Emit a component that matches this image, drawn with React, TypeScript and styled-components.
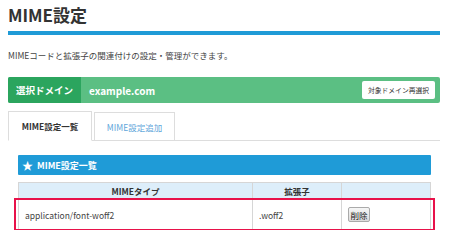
import React from "react";
import styled, { createGlobalStyle } from "styled-components";

const GlobalStyle = createGlobalStyle`
  html, body {
    margin: 0;
    padding: 0;
    background: #fff;
  }
  body {
    font-family: "Noto Sans CJK JP", "Noto Sans", sans-serif;
    color: #333;
  }
`;

const rows = [{ mime: "application/font-woff2", ext: ".woff2" }];

const App: React.FC = () => {
  return (
    <Page>
      <GlobalStyle />
      <Title>MIME設定</Title>
      <Desc>MIMEコードと拡張子の関連付けの設定・管理ができます。</Desc>

      <DomainBar>
        <DomainLabel>選択ドメイン</DomainLabel>
        <DomainName>example.com</DomainName>
        <ReselectButton>対象ドメイン再選択</ReselectButton>
      </DomainBar>

      <Tabs>
        <Tab active>MIME設定一覧</Tab>
        <Tab>MIME設定追加</Tab>
      </Tabs>

      <Panel>
        <PanelHeader>
          <Star>★</Star>
          MIME設定一覧
        </PanelHeader>

        <TableWrap>
          <Table>
            <thead>
              <tr>
                <Th style={{ width: 233 }}>MIMEタイプ</Th>
                <Th style={{ width: 88 }}>拡張子</Th>
                <Th />
              </tr>
            </thead>
            <tbody>
              {rows.map((r) => (
                <tr key={r.mime}>
                  <Td>{r.mime}</Td>
                  <Td>{r.ext}</Td>
                  <Td>
                    <DeleteButton>削除</DeleteButton>
                  </Td>
                </tr>
              ))}
            </tbody>
          </Table>
          <Highlight />
        </TableWrap>
      </Panel>
    </Page>
  );
};

const Page = styled.div`
  width: 432px;
  padding: 3px 10px 0 8px;
`;

const Title = styled.h1`
  margin: 0;
  height: 32px;
  box-sizing: border-box;
  font-size: 17px;
  font-weight: bold;
  line-height: 24px;
  color: #333;
  border-bottom: 4px solid #1f9bd7;
`;

const Desc = styled.p`
  margin: 13px 0 0;
  font-size: 8.5px;
  line-height: 14px;
  color: #444;
`;

const DomainBar = styled.div`
  margin-top: 15px;
  height: 26px;
  display: flex;
  align-items: center;
  background: #5bbf83;
  border-radius: 2px;
  overflow: hidden;
`;

const DomainLabel = styled.div`
  width: 73px;
  height: 100%;
  display: flex;
  align-items: center;
  justify-content: center;
  background: #2ba55e;
  color: #fff;
  font-size: 9.5px;
  font-weight: bold;
`;

const DomainName = styled.div`
  flex: 1;
  padding-left: 8px;
  color: #fff;
  font-size: 10px;
  font-weight: bold;
`;

const ReselectButton = styled.button`
  margin-right: 5px;
  width: 73px;
  height: 18px;
  padding: 0;
  border: none;
  border-radius: 2px;
  background: #fff;
  color: #333;
  font-family: inherit;
  font-size: 6.8px;
  white-space: nowrap;
`;

const Tabs = styled.div`
  margin-top: 8px;
  display: flex;
  align-items: flex-end;
  gap: 2px;
  height: 29px;
  border-bottom: 1px solid #ddd;
`;

const Tab = styled.div<{ active?: boolean }>`
  width: ${(p) => (p.active ? "84px" : "81px")};
  height: ${(p) => (p.active ? "30px" : "28px")};
  margin-bottom: ${(p) => (p.active ? "-1px" : "0")};
  display: flex;
  align-items: center;
  justify-content: center;
  box-sizing: border-box;
  border: 1px solid #ddd;
  border-bottom: ${(p) => (p.active ? "1px solid #fff" : "none")};
  background: #fff;
  color: ${(p) => (p.active ? "#333" : "#5fa6da")};
  font-size: 8.5px;
  font-weight: ${(p) => (p.active ? "bold" : "normal")};
`;

const Panel = styled.div`
  margin: 14px 9px 0 10px;
`;

const PanelHeader = styled.div`
  height: 20px;
  display: flex;
  align-items: center;
  gap: 4px;
  padding-left: 4px;
  background: #1f9bd7;
  border-radius: 1px;
  color: #fff;
  font-size: 9px;
  font-weight: bold;
`;

const Star = styled.span`
  font-size: 11px;
  line-height: 1;
`;

const TableWrap = styled.div`
  position: relative;
  margin-top: 7px;
`;

const Table = styled.table`
  width: 100%;
  border-collapse: collapse;
  font-size: 8.5px;
  color: #444;
`;

const Th = styled.th`
  height: 16px;
  padding: 0;
  background: #ddeefa;
  border: 1px solid #d6d6d6;
  font-weight: bold;
  color: #333;
`;

const Td = styled.td`
  height: 29px;
  padding: 0 0 0 6px;
  border: 1px solid #d6d6d6;
  text-align: left;
`;

const DeleteButton = styled.button`
  width: 22px;
  height: 15px;
  padding: 0;
  border: 1px solid #aaa;
  border-radius: 2px;
  background: linear-gradient(#f6f6f6, #dcdcdc);
  color: #222;
  font-family: inherit;
  font-size: 8.5px;
`;

const Highlight = styled.div`
  position: absolute;
  top: 16px;
  left: -4px;
  right: -4px;
  height: 33px;
  box-sizing: border-box;
  border: 2px solid #e8124a;
  pointer-events: none;
`;

export default App;
